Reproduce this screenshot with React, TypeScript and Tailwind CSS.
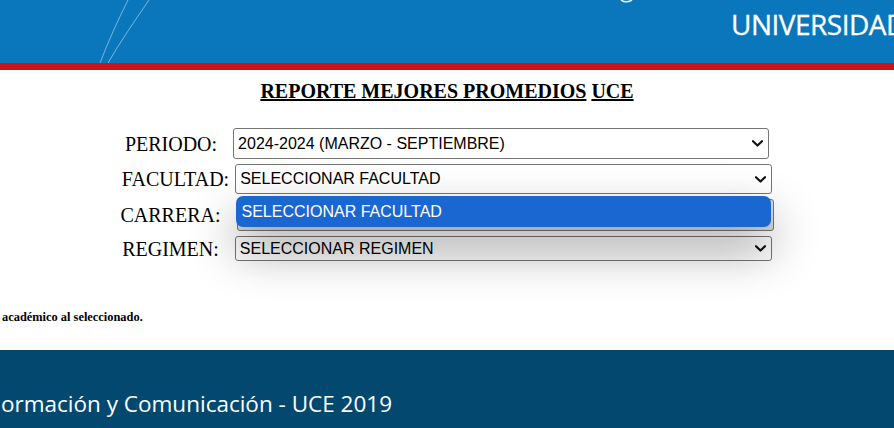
import React from "react";

function Chevron() {
  return (
    <svg width="11" height="7" viewBox="0 0 11 7" className="shrink-0">
      <path d="M1 1.2 L5.5 5.5 L10 1.2" fill="none" stroke="#111" strokeWidth="2.2" strokeLinecap="round" strokeLinejoin="round" />
    </svg>
  );
}

function FakeSelect({ text, w, h, bg = "bg-white" }: { text: string; w: string; h: string; bg?: string }) {
  return (
    <div
      className={`${w} ${h} ${bg} border border-[#767676] rounded-[3px] flex items-center justify-between pl-[4px] pr-[5px] text-[16px] text-black`}
      style={{ fontFamily: "'Liberation Sans', Arial, sans-serif" }}
    >
      <span className="whitespace-nowrap">{text}</span>
      <Chevron />
    </div>
  );
}

export default function App() {
  const serif = { fontFamily: "'Liberation Serif', 'Times New Roman', serif" };
  const open = { fontFamily: "'Open Sans', 'Noto Sans', sans-serif" };
  return (
    <div className="w-[894px] h-[428px] overflow-hidden bg-white flex flex-col">
      {/* Header banner */}
      <div className="relative h-[63px] bg-[#0a77bd] overflow-hidden shrink-0">
        <svg className="absolute left-0 top-0" width="894" height="63" viewBox="0 0 894 63">
          <path d="M128 0 C118 20 108 42 100 63" fill="none" stroke="rgba(255,255,255,0.45)" strokeWidth="1" />
          <path d="M149 0 C134 22 120 42 108 63" fill="none" stroke="rgba(255,255,255,0.45)" strokeWidth="1" />
          <path d="M621 0 Q626 3.5 632 0" fill="none" stroke="rgba(255,255,255,0.9)" strokeWidth="1.6" />
        </svg>
        <div
          className="relative pl-[731px] pt-[10px] text-white text-[28px] leading-[28px] font-normal whitespace-nowrap tracking-[-0.5px] [-webkit-text-stroke:0.3px_white]"
          style={open}
        >
          UNIVERSIDAD
        </div>
      </div>
      <div className="h-[7px] bg-[#d20f1b] shrink-0" />

      {/* Main */}
      <div className="h-[280px] shrink-0 flex flex-col items-center relative">
        <div className="mt-[10px] text-[20px] leading-[22px] font-bold text-black whitespace-nowrap" style={serif}>
          <u>REPORTE MEJORES PROMEDIOS</u> <u>UCE</u>
        </div>

        <div className="mt-[26px] flex items-center">
          <span className="text-[20px] leading-[22px] text-black" style={serif}>PERIODO:</span>
          <div className="ml-[16px]">
            <FakeSelect text="2024-2024 (MARZO - SEPTIEMBRE)" w="w-[536px]" h="h-[31px]" />
          </div>
        </div>

        <div className="mt-[5px] flex items-center">
          <span className="text-[20px] leading-[22px] text-black" style={serif}>FACULTAD:</span>
          <div className="ml-[6px]">
            <FakeSelect text="SELECCIONAR FACULTAD" w="w-[537px]" h="h-[30px]" />
          </div>
        </div>

        <div className="mt-[5px] flex items-center">
          <span className="text-[20px] leading-[22px] text-black" style={serif}>CARRERA:</span>
          <div className="ml-[16px] relative">
            <FakeSelect text="" w="w-[537px]" h="h-[32px]" bg="bg-[#dcdcdc]" />
            {/* Open dropdown popup */}
            <div
              className="absolute left-[-1px] top-[-3px] w-[535px] h-[31px] rounded-[7px] bg-[#1b67d2] flex items-center pl-[6px] text-white text-[16px] whitespace-nowrap shadow-[0_22px_48px_rgba(0,0,0,0.42)] z-10"
              style={{ fontFamily: "'Liberation Sans', Arial, sans-serif" }}
            >
              SELECCIONAR FACULTAD
            </div>
          </div>
        </div>

        <div className="mt-[5px] flex items-center">
          <span className="text-[20px] leading-[22px] text-black" style={serif}>REGIMEN:</span>
          <div className="ml-[16px]">
            <FakeSelect text="SELECCIONAR REGIMEN" w="w-[537px]" h="h-[25px]" bg="bg-white" />
          </div>
        </div>

        <div
          className="self-start mt-[49px] pl-[2px] text-[12.4px] leading-[14px] font-bold text-black whitespace-nowrap"
          style={serif}
        >
          académico al seleccionado.
        </div>
      </div>

      {/* Footer */}
      <div className="h-[78px] bg-[#03496f] shrink-0">
        <div className="pt-[39px] pl-[1px] text-white text-[22.5px] leading-[30px] whitespace-nowrap" style={open}>
          ormación y Comunicación - UCE 2019
        </div>
      </div>
    </div>
  );
}
